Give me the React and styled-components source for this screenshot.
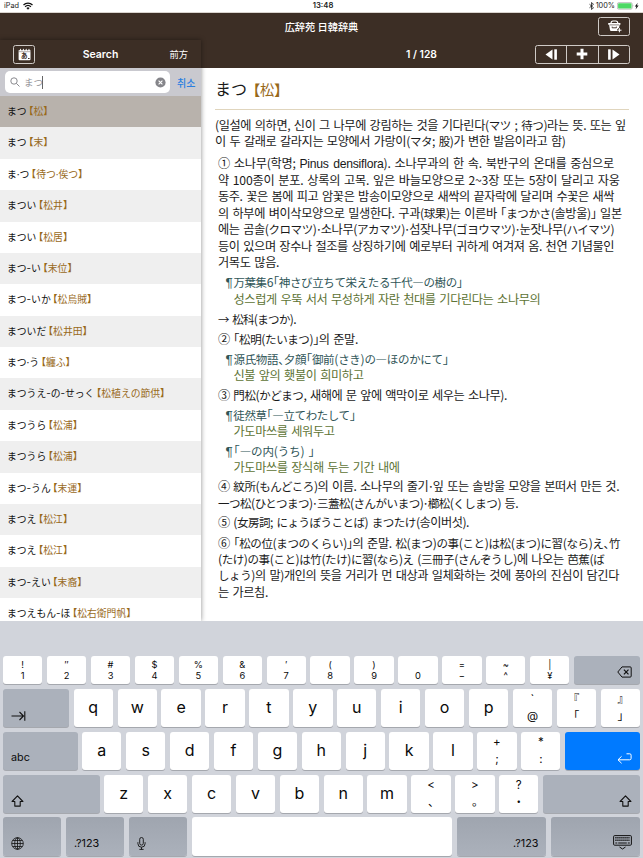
import React from "react";
import styled, { createGlobalStyle } from "styled-components";

const GlobalStyle = createGlobalStyle`
  * {
    box-sizing: border-box;
  }
  body {
    margin: 0;
    background: #fff;
    font-family: Inter, "Noto Sans CJK JP", sans-serif;
  }
`;

const Screen = styled.div`
  display: flex;
  flex-direction: column;
  width: 643px;
  height: 858px;
  overflow: hidden;
`;

const StatusBar = styled.div`
  display: grid;
  grid-template-columns: 1fr auto 1fr;
  align-items: center;
  flex: none;
  height: 13px;
  padding: 0 3px 0 4px;
  border-bottom: 1px solid #d9d4cf;
  color: #222;
  font-size: 7.3px;
  line-height: 12px;
`;

const StatusGroup = styled.div`
  display: flex;
  align-items: center;
  justify-content: ${({ $end }) => ($end ? "flex-end" : "flex-start")};
  gap: ${({ $end }) => ($end ? "2px" : "4px")};
`;

const Clock = styled.div`
  padding-left: 2px;
  font-weight: 600;
  font-size: 7.7px;
`;

const TitleBar = styled.header`
  display: grid;
  grid-template-columns: 1fr auto 1fr;
  align-items: center;
  flex: none;
  height: 27px;
  padding: 0 13px;
  background: #3c2e25;
  color: #fff;
`;

const AppTitle = styled.h1`
  margin: 0;
  font-family: "Noto Sans CJK JP", sans-serif;
  font-weight: 500;
  font-size: 10.2px;
  line-height: 27px;
`;

const BarButton = styled.div`
  display: flex;
  align-items: center;
  justify-content: center;
  justify-self: end;
  width: ${({ $width }) => $width}px;
  height: 19px;
  border: 1px solid #cfcac6;
  border-radius: 2.5px;
`;

const Segments = styled(BarButton)`
  justify-content: stretch;
`;

const Segment = styled.div`
  display: flex;
  flex: 1;
  align-items: center;
  justify-content: center;
  height: 100%;
  & + & {
    border-left: 1px solid #cfcac6;
  }
`;

const Split = styled.div`
  display: flex;
  flex: none;
  height: 581px;
  background: #3c2e25;
`;

const Sidebar = styled.aside`
  display: flex;
  flex-direction: column;
  flex: none;
  width: 201px;
  overflow: hidden;
  z-index: 1;
  box-shadow: 0 0 5px rgba(0, 0, 0, 0.45);
  background: #fff;
`;

const SidebarHeader = styled.div`
  display: grid;
  grid-template-columns: 1fr auto 1fr;
  align-items: center;
  flex: none;
  height: 28px;
  padding: 0 13px 0 13px;
  background: #3c2e25;
  color: #fff;
`;

const SidebarTitle = styled.div`
  font-weight: 600;
  font-size: 10.5px;
`;

const Mode = styled.div`
  justify-self: end;
  font-family: "Noto Sans CJK JP", sans-serif;
  font-size: 9.3px;
`;

const HistoryButton = styled(BarButton)`
  justify-self: start;
`;

const SearchBar = styled.div`
  display: flex;
  align-items: center;
  flex: none;
  height: 28px;
  padding: 0 5px;
  background: #c9c9cf;
`;

const SearchField = styled.div`
  display: flex;
  align-items: center;
  flex: none;
  width: 165px;
  height: 22px;
  padding: 0 4px 0 5px;
  border-radius: 5px;
  background: #fff;
`;

const Query = styled.div`
  flex: 1;
  margin-left: 4px;
  color: #98989d;
  font-family: "Noto Sans CJK JP", sans-serif;
  font-size: 9.5px;
  line-height: 14px;
`;

const Caret = styled.span`
  display: inline-block;
  width: 1px;
  height: 13px;
  margin-left: -1px;
  vertical-align: middle;
  background: #666;
`;

const Cancel = styled.div`
  margin-left: 7px;
  color: #2b7fe0;
  font-family: "Noto Sans CJK JP", sans-serif;
  font-weight: 500;
  font-size: 10px;
  white-space: nowrap;
`;

const WordRow = styled.div`
  flex: none;
  height: 31.38px;
  padding-left: 7px;
  background: ${({ $tone }) => $tone};
  color: #111;
  font-family: "Noto Sans CJK JP", sans-serif;
  font-feature-settings: "halt";
  font-size: 9.8px;
  line-height: 31.4px;
  white-space: nowrap;
`;

const Joint = styled.span`
  margin: 0 ${({ $dot }) => ($dot ? -0.1 : 0)}px;
  font-family: Inter, sans-serif;
`;

const Kanji = styled.span`
  margin-left: 2px;
  color: #98691a;
`;

const Bracket = styled.span`
  font-weight: 700;
`;

const Detail = styled.main`
  display: flex;
  flex-direction: column;
  flex: 1;
  min-width: 0;
`;

const DetailHeader = styled.div`
  display: grid;
  grid-template-columns: 1fr auto 1fr;
  align-items: center;
  flex: none;
  height: 28px;
  padding: 0 13px 0 12px;
  color: #fff;
`;

const Counter = styled.div`
  font-weight: 600;
  font-size: 10.3px;
`;

const Article = styled.article`
  flex: 1;
  padding: 0 14px;
  background: #fff;
  color: #1a1a1a;
  font-family: "Noto Sans CJK JP", sans-serif;
  font-feature-settings: "halt";
  font-size: 12.2px;
  line-height: 16.45px;
  word-spacing: 1.3px;
  white-space: nowrap;
`;

const Headword = styled.h2`
  height: 42px;
  margin: 0 0 6.5px;
  border-bottom: 1px solid #e0d5bd;
  font-weight: 400;
  font-size: 16px;
  line-height: 40px;
`;

const HeadKanji = styled(Kanji)`
  margin-left: 6px;
  font-size: 14.2px;
`;

const Sense = styled.div`
  padding-left: ${({ $indent = 3 }) => $indent}px;
  margin-bottom: ${({ $after = 3.5 }) => $after}px;
`;

const Example = styled(Sense)`
  color: #2f5557;
`;

const LineRow = styled.div`
  height: 16.45px;
  letter-spacing: ${({ $track }) => $track}px;
`;

const TranslationRow = styled(LineRow)`
  padding-left: 8px;
  color: #5d7334;
`;

const Latin = styled.span`
  font-family: "Liberation Sans", sans-serif;
`;

// kana and kanji sit slightly smaller than the hangul around them
const Japanese = styled.span`
  font-size: 11.5px;
`;

const Dot = styled.span`
  margin: 0 -1px;
`;

const Pilcrow = styled(Latin)`
  margin-right: 1px;
  font-size: 13.5px;
  line-height: 1;
`;

const Keyboard = styled.div`
  display: flex;
  flex-direction: column;
  flex: 1;
  gap: 4.7px;
  padding: 35px 3px 0;
  background: #d1d4db;
  font-family: Inter, "Noto Sans CJK JP", sans-serif;
  font-feature-settings: "halt";
  z-index: 2;
`;

const KeyRow = styled.div`
  display: flex;
  flex: none;
  gap: 4.6px;
  height: ${({ $short }) => ($short ? 28.4 : 38.1)}px;
`;

const Key = styled.div`
  display: flex;
  flex-direction: column;
  align-items: center;
  justify-content: center;
  flex: ${({ $width }) => ($width ? `0 0 ${$width}px` : "1")};
  padding-bottom: 2px;
  border-radius: 3px;
  background: #fff;
  box-shadow: 0 1px 0 #a5a8ae;
  color: #0a0a0a;
  font-size: 16px;
`;

const DualKey = styled(Key)`
  justify-content: space-between;
  padding: ${({ $tall }) => ($tall ? "4px 0 4px" : "3px 0")};
  font-size: ${({ $tall }) => ($tall ? 11.5 : 9.3)}px;
  line-height: ${({ $tall }) => ($tall ? 13 : 11)}px;
  & span {
    min-height: 11px;
  }
`;

const ControlKey = styled(Key)`
  align-items: ${({ $end }) => ($end ? "flex-end" : "flex-start")};
  justify-content: flex-end;
  padding: 0 8px 6px;
  background: ${({ $primary, $last }) =>
    $primary ? "#007aff" : $last ? "linear-gradient(#9fa5af, #abb1bb)" : "#abb1bb"};
  font-size: 10.8px;
  line-height: 13px;
`;

const words = [
  ["まつ", "松"],
  ["まつ", "末"],
  ["ま·つ", "待つ·俟つ"],
  ["まつい", "松井"],
  ["まつい", "松居"],
  ["まつ-い", "末位"],
  ["まつ-いか", "松烏賊"],
  ["まついだ", "松井田"],
  ["まつ·う", "纏ふ"],
  ["まつうえ-の-せっく", "松植えの節供"],
  ["まつうら", "松浦"],
  ["まつうら", "松浦"],
  ["まつ-うん", "末運"],
  ["まつえ", "松江"],
  ["まつえ", "松江"],
  ["まつ-えい", "末裔"],
  ["まつえもん-ほ", "松右衛門帆"],
];

const rowTone = (index) => {
  if (index === 0) return "#b8b2ac";
  return index % 2 ? "#efefef" : "#fff";
};

const numberKeys = ["!1", "″2", "#3", "$4", "%5", "&6", "′7", "(8", ")9", " 0", "=−", "~^", "|¥"];

const withJoints = (text) =>
  text.split(/([-·])/).map((part, index) =>
    index % 2 ? (
      <Joint key={index} $dot={part === "·"}>
        {part}
      </Joint>
    ) : (
      part
    )
  );

const setScripts = (text) =>
  text.split(/([\u3001\u3040-\u30ff\u4e00-\u9fff―→]+|·|¶|Pinus densiflora)/).map((part, index) => {
    if (index % 2 === 0) return part;
    if (part === "·") return <Dot key={index}>·</Dot>;
    if (part === "¶") return <Pilcrow key={index}>¶</Pilcrow>;
    if (part[0] === "P") return <Latin key={index}>{part}</Latin>;
    return <Japanese key={index}>{part}</Japanese>;
  });

const Line = ({ track = -0.4, children }) => <LineRow $track={track}>{setScripts(children)}</LineRow>;

const Translation = ({ children }) => <TranslationRow $track={-0.39}>{children}</TranslationRow>;

const WifiIcon = () => (
  <svg width="10" height="8" viewBox="0 0 20 15">
    <path d="M1 5.5a13 13 0 0 1 18 0M4.2 9a8.5 8.5 0 0 1 11.6 0" fill="none" stroke="#111" strokeWidth="2.6" />
    <path d="M6.8 11.4a5 5 0 0 1 6.4 0L10 15z" fill="#111" />
  </svg>
);

const BluetoothIcon = () => (
  <svg width="5" height="8" viewBox="0 0 10 16">
    <path d="M1 4.5l8 7-4 3.5V1l4 3.5-8 7" fill="none" stroke="#111" strokeWidth="1.5" />
  </svg>
);

const BatteryIcon = () => (
  <svg width="23" height="8" viewBox="0 0 23 8">
    <rect x="0.4" y="0.6" width="14.8" height="6.6" rx="1.4" fill="#fff" stroke="#888" strokeWidth="0.5" />
    <rect x="1.1" y="1.3" width="13.4" height="5.2" rx="0.8" fill="#4cd964" />
    <path d="M15.8 2.8q1 1.1 0 2.2z" fill="#777" />
    <path d="M20.8 0.8l-3 3.6h1.6l-.8 3 3-3.8h-1.7z" fill="#111" />
  </svg>
);

const BasketIcon = () => (
  <svg width="15" height="13" viewBox="0 0 15 13">
    <path d="M4 3.4q0-2.4 2-2.4h2.8q2 0 2 2.4" fill="none" stroke="#fff" strokeWidth="1.2" />
    <path d="M1.2 3h12.2v1.7h-.8l-.9 5.4q-.2.9-1 .9H4q-.8 0-1-.9L2.1 4.7h-.9z" fill="#fff" />
    <path d="M2.6 4.9H12" fill="none" stroke="#3c2e25" strokeWidth=".6" />
    <path d="M5.2 6.6v1.2h4.2V6.6" fill="none" stroke="#3c2e25" strokeWidth=".9" />
    <path d="M12.4 7.9v4.6M10.1 10.2h4.6" stroke="#3c2e25" strokeWidth="2.4" />
    <path d="M12.4 8.1v4.2M10.3 10.2h4.2" stroke="#fff" strokeWidth="1" />
  </svg>
);

const HistoryIcon = () => (
  <svg width="13" height="13" viewBox="0 0 13 13">
    <path
      d="M.6 2.2h1L2.500.6l.9 1.600h1.100L5.400.6l.9 1.600h1L8.200.6l.9 1.600h1L11 .6l.8 1.600h.700v9q0 1-1 1H1.600q-1 0-1-1z"
      fill="#fff"
    />
    <path d="M.6 3.700h11.900" stroke="#3c2e25" strokeWidth=".4" />
    <text
      x="6.300"
      y="10.400"
      textAnchor="middle"
      fontSize="6.500"
      fontWeight="700"
      fontFamily="Noto Sans CJK JP"
      fill="#3c2e25"
    >
      あ
    </text>
    <path d="M10 10.500h1.600" stroke="#3c2e25" strokeWidth="1" />
  </svg>
);

const PrevIcon = () => (
  <svg width="13" height="11" viewBox="0 0 13 11">
    <path d="M.5 5.5l7-5v10z" fill="#fff" />
    <rect x="9.3" y=".3" width="2.6" height="10.4" fill="#fff" />
  </svg>
);

const NextIcon = () => (
  <svg width="13" height="11" viewBox="0 0 13 11">
    <path d="M12.5 5.500l-7-5v10z" fill="#fff" />
    <rect x="1.1" y=".3" width="2.6" height="10.4" fill="#fff" />
  </svg>
);

const PlusIcon = () => (
  <svg width="12" height="12" viewBox="0 0 12 12">
    <path d="M6 .7v10.6M.7 6h10.6" stroke="#fff" strokeWidth="3" />
  </svg>
);

const SearchIcon = () => (
  <svg width="10" height="10" viewBox="0 0 10 10" fill="none" stroke="#7d7d82" strokeWidth=".9">
    <circle cx="4" cy="4" r="3.2" />
    <path d="M6.4 6.4l3.1 3.1" />
  </svg>
);

const ClearIcon = () => (
  <svg width="11" height="11" viewBox="0 0 11 11">
    <circle cx="5.5" cy="5.5" r="5.1" fill="#85858a" />
    <path d="M3.6 3.6l3.8 3.8M7.4 3.6L3.6 7.4" stroke="#fff" strokeWidth="1.1" />
  </svg>
);

const TabIcon = () => (
  <svg width="15" height="10" viewBox="0 0 15 10" fill="none" stroke="#111" strokeWidth="1.1">
    <path d="M.5 5h12M8.5 1l4 4-4 4M13.8.3v9.4" />
  </svg>
);

const ShiftIcon = () => (
  <svg width="13" height="12" viewBox="0 0 13 12">
    <path
      d="M6.5.9l5.4 5.600H9.200v4.600H3.800V6.500H1.100z"
      fill="none"
      stroke="#111"
      strokeWidth="1.1"
      strokeLinejoin="round"
    />
  </svg>
);

const GlobeIcon = () => (
  <svg width="13" height="13" viewBox="0 0 13 13" fill="none" stroke="#111" strokeWidth=".8">
    <circle cx="6.5" cy="6.5" r="5.8" />
    <ellipse cx="6.5" cy="6.5" rx="2.8" ry="5.8" />
    <path d="M.7 6.5h11.6M6.5.7v11.6M1.700 3.500h9.600M1.700 9.500h9.600" />
  </svg>
);

const MicIcon = () => (
  <svg width="9" height="13" viewBox="0 0 9 13" fill="none" stroke="#111" strokeWidth=".9">
    <rect x="2.7" y=".5" width="3.6" height="7.6" rx="1.8" />
    <path d="M.9 5.2v1.4a3.6 3.6 0 0 0 7.2 0V5.2M4.5 10.2v2.2M2.4 12.4h4.2" />
  </svg>
);

const DeleteIcon = () => (
  <svg width="15" height="12" viewBox="0 0 15 12" fill="none" stroke="#111" strokeWidth="1">
    <path d="M5 .9h8.2q1 0 1 1v8.2q0 1-1 1H5L.8 6z" strokeLinejoin="round" />
    <path d="M6.9 3.7l4.6 4.6M11.5 3.7L6.9 8.3" strokeWidth="1.2" />
  </svg>
);

const ReturnIcon = () => (
  <svg width="15" height="11" viewBox="0 0 15 11" fill="none" stroke="#fff" strokeWidth="1">
    <path d="M9.5.8h3.2q1.4 0 1.4 1.4v3.2q0 1.4-1.4 1.4H1M4.6 3.3L1 6.8l3.6 3.5" />
  </svg>
);

const HideKeyboardIcon = () => (
  <svg width="19" height="15" viewBox="0 0 19 15" fill="none" stroke="#111">
    <rect x=".6" y=".6" width="17.8" height="9.6" rx="1" strokeWidth="1" />
    <path d="M2.3 2.8h14.5M2.3 5.2h14.5" strokeWidth="1.4" strokeDasharray="1.3 .7" />
    <path d="M2.3 8h2M5.2 8h8.6M14.8 8h2" strokeWidth="1.2" />
    <path d="M6.5 12l3 2 3-2" strokeWidth="1" />
  </svg>
);

const Letters = ({ text }) => text.split("").map((char) => <Key key={char}>{char}</Key>);

const Dual = ({ keys, tall }) =>
  keys.map((pair) => (
    <DualKey key={pair} $tall={tall}>
      <span>{pair[0]}</span>
      <span>{pair[1]}</span>
    </DualKey>
  ));

const App = () => (
  <Screen>
    <GlobalStyle />
    <StatusBar>
      <StatusGroup>
        iPad
        <WifiIcon />
      </StatusGroup>
      <Clock>13:48</Clock>
      <StatusGroup $end>
        <BluetoothIcon />
        100%
        <BatteryIcon />
      </StatusGroup>
    </StatusBar>
    <TitleBar>
      <span />
      <AppTitle>広辞苑 日韓辞典</AppTitle>
      <BarButton $width={32}>
        <BasketIcon />
      </BarButton>
    </TitleBar>
    <Split>
      <Sidebar>
        <SidebarHeader>
          <HistoryButton $width={22}>
            <HistoryIcon />
          </HistoryButton>
          <SidebarTitle>Search</SidebarTitle>
          <Mode>前方</Mode>
        </SidebarHeader>
        <SearchBar>
          <SearchField>
            <SearchIcon />
            <Query>
              まつ
              <Caret />
            </Query>
            <ClearIcon />
          </SearchField>
          <Cancel>취소</Cancel>
        </SearchBar>
        {words.map(([reading, kanji], index) => (
          <WordRow key={index} $tone={rowTone(index)}>
            {withJoints(reading)}
            <Kanji>
              <Bracket>【</Bracket>
              {withJoints(kanji)}
              <Bracket>】</Bracket>
            </Kanji>
          </WordRow>
        ))}
      </Sidebar>
      <Detail>
        <DetailHeader>
          <span />
          <Counter>1 / 128</Counter>
          <Segments $width={95}>
            <Segment>
              <PrevIcon />
            </Segment>
            <Segment>
              <PlusIcon />
            </Segment>
            <Segment>
              <NextIcon />
            </Segment>
          </Segments>
        </DetailHeader>
        <Article>
          <Headword>
            まつ
            <HeadKanji>
              <Bracket>【</Bracket>松<Bracket>】</Bracket>
            </HeadKanji>
          </Headword>
          <Sense $indent={0} $after={6}>
            <Line>(일설에 의하면, 신이 그 나무에 강림하는 것을 기다린다(マツ ; 待つ)라는 뜻. 또는 잎</Line>
            <Line>이 두 갈래로 갈라지는 모양에서 가랑이(マタ; 股)가 변한 발음이라고 함)</Line>
          </Sense>
          <Sense $after={4}>
            <Line track={-0.24}>① 소나무(학명; Pinus densiflora). 소나무과의 한 속. 북반구의 온대를 중심으로</Line>
            <Line track={-0.22}>약 100종이 분포. 상록의 고목. 잎은 바늘모양으로 2~3장 또는 5장이 달리고 자웅</Line>
            <Line>동주. 꽃은 봄에 피고 암꽃은 밤송이모양으로 새싹의 끝자락에 달리며 수꽃은 새싹</Line>
            <Line track={-0.37}>의 하부에 벼이삭모양으로 밀생한다. 구과(球果)는 이른바 「まつかさ(솔방울)」 일본</Line>
            <Line track={-0.43}>에는 곰솔(クロマツ)·소나무(アカマツ)·섬잦나무(ゴヨウマツ)·눈잣나무(ハイマツ)</Line>
            <Line>등이 있으며 장수나 절조를 상징하기에 예로부터 귀하게 여겨져 옴. 천연 기념물인</Line>
            <Line track={-0.35}>거목도 많음.</Line>
          </Sense>
          <Example $indent={10.5}>
            <Line track={-0.38}>¶万葉集6「神さび立ちて栄えたる千代―の樹の」</Line>
            <Translation>성스럽게 우뚝 서서 무성하게 자란 천대를 기다린다는 소나무의</Translation>
          </Example>
          <Sense>
            <Line track={-0.68}>→ 松科(まつか).</Line>
          </Sense>
          <Sense>
            <Line>② 「松明(たいまつ)」의 준말.</Line>
          </Sense>
          <Example $indent={10.5}>
            <Line track={-0.3}>¶源氏物語、夕顔「御前(さき)の―ほのかにて」</Line>
            <Translation>신불 앞의 횃불이 희미하고</Translation>
          </Example>
          <Sense>
            <Line track={-0.44}>③ 門松(かどまつ, 새해에 문 앞에 액막이로 세우는 소나무).</Line>
          </Sense>
          <Example $indent={10.5} $after={3}>
            <Line>¶徒然草「―立てわたして」</Line>
            <Translation>가도마쓰를 세워두고</Translation>
          </Example>
          <Example $indent={10.5} $after={2.5}>
            <Line track={-0.11}>¶「―の内(うち) 」</Line>
            <Translation>가도마쓰를 장식해 두는 기간 내에</Translation>
          </Example>
          <Sense $after={3}>
            <Line track={-0.43}>④ 紋所(もんどころ)의 이름. 소나무의 줄기·잎 또는 솔방울 모양을 본떠서 만든 것.</Line>
            <Line track={-0.49}>一つ松(ひとつまつ)·三蓋松(さんがいまつ)·櫛松(くしまつ) 등.</Line>
          </Sense>
          <Sense $after={4}>
            <Line track={-0.48}>⑤ (女房詞; にょうぼうことば) まつたけ(송이버섯).</Line>
          </Sense>
          <Sense>
            <Line track={-0.37}>⑥ 「松の位(まつのくらい)」의 준말. 松(まつ)の事(こと)は松(まつ)に習(なら)え、竹</Line>
            <Line track={-0.43}>(たけ)の事(こと)は竹(たけ)に習(なら)え (三冊子(さんぞうし)에 나오는 芭蕉(ば</Line>
            <Line track={-0.41}>しょう)의 말)개인의 뜻을 거리가 먼 대상과 일체화하는 것에 풍아의 진심이 담긴다</Line>
            <Line>는 가르침.</Line>
          </Sense>
        </Article>
      </Detail>
    </Split>
    <Keyboard>
      <KeyRow $short>
        <Dual keys={numberKeys} />
        <ControlKey $width={66} $end>
          <DeleteIcon />
        </ControlKey>
      </KeyRow>
      <KeyRow>
        <ControlKey $width={66}>
          <TabIcon />
        </ControlKey>
        <Letters text="qwertyuiop" />
        <Dual tall keys={["`@", "『「", "』」"]} />
      </KeyRow>
      <KeyRow>
        <ControlKey $width={74.5}>abc</ControlKey>
        <Letters text="asdfghjkl" />
        <Dual tall keys={["+;", "*:"]} />
        <ControlKey $width={75} $end $primary>
          <ReturnIcon />
        </ControlKey>
      </KeyRow>
      <KeyRow>
        <ControlKey $width={96.5}>
          <ShiftIcon />
        </ControlKey>
        <Letters text="zxcvbnm" />
        <Dual tall keys={["<、", ">。", "?・"]} />
        <ControlKey $width={97} $end>
          <ShiftIcon />
        </ControlKey>
      </KeyRow>
      <KeyRow>
        <ControlKey $width={58.3} $last>
          <GlobeIcon />
        </ControlKey>
        <ControlKey $width={58.3} $last>
          .?123
        </ControlKey>
        <ControlKey $width={58.3} $last>
          <MicIcon />
        </ControlKey>
        <Key />
        <ControlKey $width={89.5} $last $end>
          .?123
        </ControlKey>
        <ControlKey $width={89} $last $end>
          <HideKeyboardIcon />
        </ControlKey>
      </KeyRow>
    </Keyboard>
  </Screen>
);

export default App;
